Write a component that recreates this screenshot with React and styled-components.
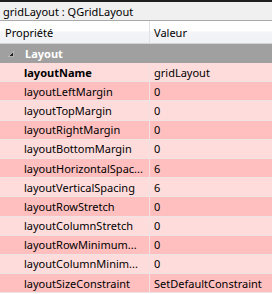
import React from "react";
import styled, { createGlobalStyle } from "styled-components";

const GlobalStyle = createGlobalStyle`
  body {
    margin: 0;
    background: #ffffff;
  }
`;

const Panel = styled.div`
  width: 272px;
  height: 294px;
  overflow: hidden;
  border-top: 2px solid #1f1f1f;
  box-sizing: border-box;
  font-family: "Noto Sans", "Open Sans", sans-serif;
  font-size: 11px;
  color: #000000;
  background: #ffffff;
`;

const TitleBar = styled.div`
  height: 18px;
  line-height: 20px;
  padding-left: 3px;
  background: #f0f0f0;
  border-bottom: 1px solid #a9a9a9;
  white-space: nowrap;
`;

const Header = styled.div`
  display: grid;
  grid-template-columns: 150px 1fr;
  height: 22px;
  background: linear-gradient(#ffffff 0%, #ffffff 45%, #f3f4f7 50%, #f1f2f5 100%);
  border-bottom: 1px solid #d5d5d5;
`;

const HeaderCell = styled.div`
  display: flex;
  align-items: center;
  padding-left: ${(p) => (p.first ? "5px" : "4px")};
  border-right: ${(p) => (p.first ? "1px solid #dfe2e6" : "none")};
`;

const Section = styled.div`
  display: flex;
  align-items: center;
  height: 19px;
  background: #a0a0a0;
  color: #ffffff;
  font-weight: bold;
`;

const Arrow = styled.span`
  display: flex;
  width: 25px;
  padding-left: 8px;
  box-sizing: border-box;
`;

const Row = styled.div`
  display: grid;
  grid-template-columns: 150px 1fr;
  height: 18.2px;
  border-bottom: 1px solid #efe3e3;
  background: ${(p) => (p.alt ? "#ffbfbf" : "#ffdcdc")};
`;

const NameCell = styled.div`
  display: flex;
  align-items: center;
  padding-left: 24px;
  border-right: 1px solid #efe3e3;
  white-space: nowrap;
  overflow: hidden;
  font-weight: ${(p) => (p.bold ? "bold" : "normal")};
`;

const ValueCell = styled.div`
  display: flex;
  align-items: center;
  padding-left: 4px;
  white-space: nowrap;
  overflow: hidden;
`;

const rows = [
  { name: "layoutName", value: "gridLayout", bold: true },
  { name: "layoutLeftMargin", value: "0" },
  { name: "layoutTopMargin", value: "0" },
  { name: "layoutRightMargin", value: "0" },
  { name: "layoutBottomMargin", value: "0" },
  { name: "layoutHorizontalSpac...", value: "6" },
  { name: "layoutVerticalSpacing", value: "6" },
  { name: "layoutRowStretch", value: "0" },
  { name: "layoutColumnStretch", value: "0" },
  { name: "layoutRowMinimum...", value: "0" },
  { name: "layoutColumnMinim...", value: "0" },
  { name: "layoutSizeConstraint", value: "SetDefaultConstraint" },
];

export default function App() {
  return (
    <>
      <GlobalStyle />
      <Panel>
        <TitleBar>gridLayout : QGridLayout</TitleBar>
        <Header>
          <HeaderCell first>Propriété</HeaderCell>
          <HeaderCell>Valeur</HeaderCell>
        </Header>
        <Section>
          <Arrow>
            <svg width="6" height="6" viewBox="0 0 6 6">
              <polygon points="5.5,0.5 5.5,5.5 0.5,5.5" fill="#262626" stroke="#e8e8e8" strokeWidth="0.6" />
            </svg>
          </Arrow>
          Layout
        </Section>
        {rows.map((r, i) => (
          <Row key={r.name} alt={i % 2 === 1}>
            <NameCell bold={r.bold}>{r.name}</NameCell>
            <ValueCell>{r.value}</ValueCell>
          </Row>
        ))}
      </Panel>
    </>
  );
}
